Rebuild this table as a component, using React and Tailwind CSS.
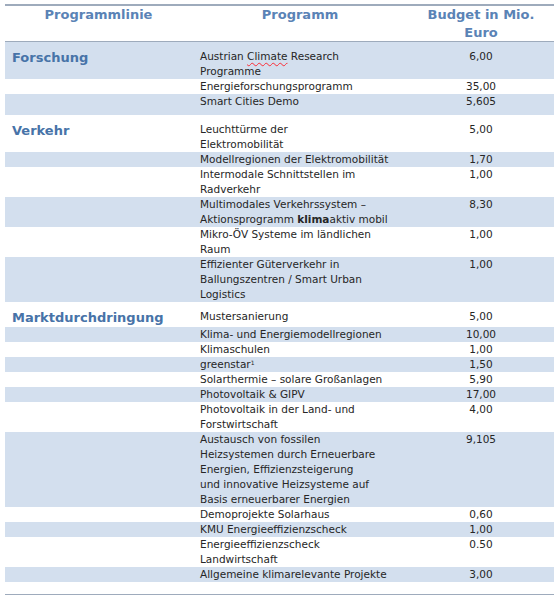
import React from "react";

const F = { fontFamily: '"DejaVu Sans", Verdana, sans-serif' };

function Row({ shaded, lines, value, label, first, extra }) {
  return (
    <div className={`flex ${shaded ? "bg-[#d3dfee]" : "bg-white"} ${first ? "pt-[7px]" : ""} ${extra || ""}`}>
      <div className="w-[187px] shrink-0 pl-[7px]">
        {label ? (
          <div className="text-[13px] font-bold leading-[17px] text-[#4773a8] whitespace-nowrap">{label}</div>
        ) : null}
      </div>
      <div className="w-[216px] shrink-0 pl-[8px] text-[10.5px] leading-[15px] text-[#262626] whitespace-nowrap">
        {lines.map((l, i) => (
          <div key={i}>{l}</div>
        ))}
      </div>
      <div className="w-[146px] shrink-0 text-center text-[10.5px] leading-[15px] text-[#262626] whitespace-nowrap">
        {value}
      </div>
    </div>
  );
}

export default function App() {
  return (
    <div className="bg-white w-[557px] h-[600px] pt-[4px] pl-[5px]" style={F}>
      <div className="w-[549px]">
        <div className="flex border-t-2 border-b border-[#9eabbc] h-[38px] text-[13px] font-bold leading-[18px] text-[#5a83b6]">
          <div className="w-[187px] text-center">Programmlinie</div>
          <div className="w-[216px] text-center">Programm</div>
          <div className="w-[146px] text-center">
            Budget in Mio.
            <br />
            Euro
          </div>
        </div>

        <Row
          shaded
          first
          label="Forschung"
          lines={[
            <>
              Austrian{" "}
              <span className="underline decoration-wavy decoration-red-500 decoration-[1px] underline-offset-2">Climate</span>{" "}
              Research
            </>,
            "Programme",
          ]}
          value="6,00"
        />
        <Row lines={["Energieforschungsprogramm"]} value="35,00" />
        <Row shaded lines={["Smart Cities Demo"]} value="5,605" extra="pb-[6px]" />

        <Row first label="Verkehr" lines={["Leuchttürme der", "Elektromobilität"]} value="5,00" />
        <Row shaded lines={["Modellregionen der Elektromobilität"]} value="1,70" />
        <Row lines={["Intermodale Schnittstellen im", "Radverkehr"]} value="1,00" />
        <Row
          shaded
          lines={[
            "Multimodales Verkehrssystem –",
            <>
              Aktionsprogramm <b>klima</b>aktiv mobil
            </>,
          ]}
          value="8,30"
        />
        <Row lines={["Mikro-ÖV Systeme im ländlichen", "Raum"]} value="1,00" />
        <Row
          shaded
          lines={["Effizienter Güterverkehr in", "Ballungszentren / Smart Urban", "Logistics"]}
          value="1,00"
        />

        <Row first label="Marktdurchdringung" lines={["Mustersanierung"]} value="5,00" extra="pb-[1px]" />
        <Row shaded lines={["Klima- und Energiemodellregionen"]} value="10,00" />
        <Row lines={["Klimaschulen"]} value="1,00" />
        <Row
          shaded
          lines={[
            <>
              greenstar<sup className="text-[6px]">1</sup>
            </>,
          ]}
          value="1,50"
        />
        <Row lines={["Solarthermie – solare Großanlagen"]} value="5,90" />
        <Row shaded lines={["Photovoltaik & GIPV"]} value="17,00" />
        <Row lines={["Photovoltaik in der Land- und", "Forstwirtschaft"]} value="4,00" />
        <Row
          shaded
          lines={[
            "Austausch von fossilen",
            "Heizsystemen durch Erneuerbare",
            "Energien, Effizienzsteigerung",
            "und innovative Heizsysteme auf",
            "Basis erneuerbarer Energien",
          ]}
          value="9,105"
        />
        <Row lines={["Demoprojekte Solarhaus"]} value="0,60" />
        <Row shaded lines={["KMU Energieeffizienzscheck"]} value="1,00" />
        <Row lines={["Energieeffizienzscheck", "Landwirtschaft"]} value="0.50" />
        <Row shaded lines={["Allgemeine klimarelevante Projekte"]} value="3,00" />
        <div className="h-[13px] border-b border-[#9eabbc]" />
      </div>
    </div>
  );
}
